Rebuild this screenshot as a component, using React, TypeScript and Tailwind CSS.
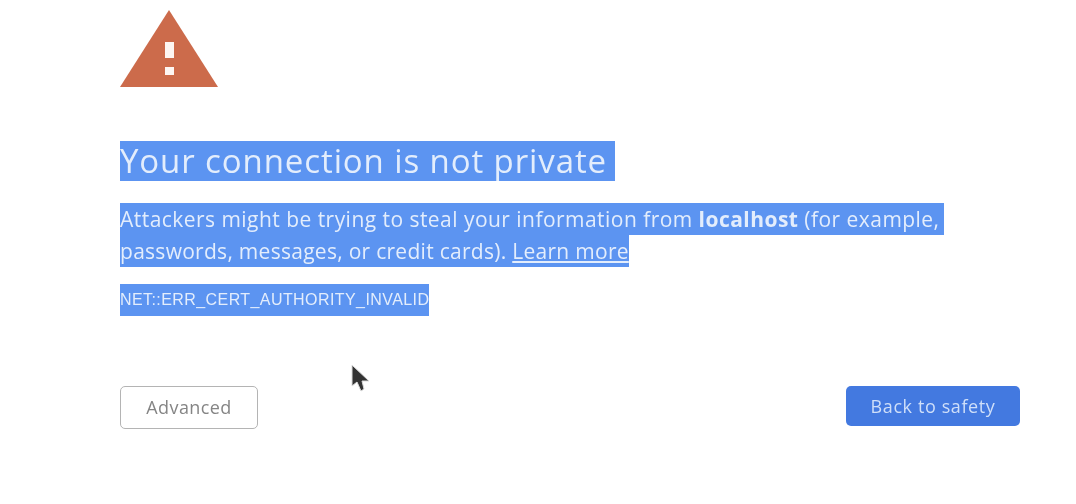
const sel = "w-fit bg-[#5c94f1] text-[#e3edfc]"

export default function App() {
  return (
    <div className="relative h-[504px] w-[1076px] overflow-hidden bg-white pl-[120px] pr-[56px] pt-[10px] font-['Open_Sans',sans-serif] blur-[0.4px]">
      <svg viewBox="0 0 98 78" className="block h-[78px] w-[98px]">
        <path d="M49 0 L98 77 H0 Z" fill="#cc6b4b" />
        <rect x="45" y="32" width="9" height="16" fill="#fdf6f2" />
        <rect x="45" y="57" width="9" height="8" fill="#fdf6f2" />
      </svg>

      <h1 className={`${sel} mt-[53px] h-10 pr-2 text-[33px] leading-10 font-normal tracking-[0.9px]`}>
        Your connection is not private
      </h1>

      <p className="mt-[22px] text-[21px] leading-8">
        <span className={`${sel} block pr-1 tracking-[0.46px]`}>
          Attackers might be trying to steal your information from <b>localhost</b> (for example,
        </span>
        <span className={`${sel} block tracking-[0.28px]`}>
          passwords, messages, or credit cards). <a className="underline">Learn more</a>
        </span>
      </p>

      <div className={`${sel} mt-[17px] font-['Liberation_Sans',sans-serif] text-[16px] leading-8 tracking-[0.42px]`}>
        NET::ERR_CERT_AUTHORITY_INVALID
      </div>

      <div className="mt-[70px] flex items-start justify-between">
        <button className="h-[43px] w-[138px] rounded-[5px] border border-[#b4b4b4] bg-white text-[18px] font-medium tracking-[0.4px] text-[#858585]">
          Advanced
        </button>
        <button className="h-10 w-[174px] rounded-[5px] bg-[#4379e0] text-[18px] font-medium tracking-[0.6px] text-[#cfdff9]">
          Back to safety
        </button>
      </div>

      {/* mouse pointer */}
      <svg viewBox="0 0 20 30" className="absolute left-[350px] top-[364px] h-[30px] w-[20px]">
        <path d="M2 1 L2 22 L7 18 L11 27 L14 25 L12 17 L19 17 Z" fill="#333333" stroke="#dddddd" strokeWidth="1" />
      </svg>
    </div>
  )
}
